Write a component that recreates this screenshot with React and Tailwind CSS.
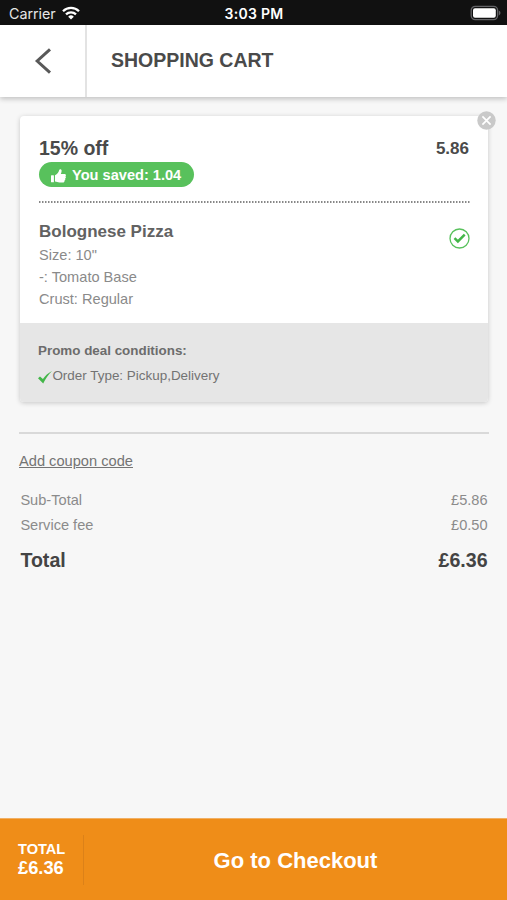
import React from "react";

const items = [
  { name: "Bolognese Pizza", options: ['Size: 10"', "-: Tomato Base", "Crust: Regular"] },
];

const fees = [
  { label: "Sub-Total", amount: "£5.86" },
  { label: "Service fee", amount: "£0.50" },
];

const StatusBar = () => (
  <div className="bg-[#111111] text-white h-[25px] shrink-0 grid grid-cols-3 items-center pl-[9px] pr-[6px] font-['Inter',sans-serif]">
    <div className="flex items-center gap-[6px] pt-[2px]">
      <span className="text-[14.3px] leading-5 tracking-[-0.03px] text-[#e6e6e6]">Carrier</span>
      <svg className="-mt-[2px]" width="18" height="14" viewBox="0 0 18 14" fill="none" stroke="#fff" strokeWidth="2.3">
        <path d="M1 5.2a11.4 11.4 0 0 1 16 0" />
        <path d="M4 8.3a7.2 7.2 0 0 1 10 0" />
        <path d="M9 13.6 6.2 10.7a4 4 0 0 1 5.6 0Z" fill="#fff" stroke="none" />
      </svg>
    </div>
    <span className="text-center text-[14px] leading-5 font-semibold tracking-[0.3px] pt-[2px] pr-[2px] whitespace-nowrap">
      3:03 PM
    </span>
    <svg className="justify-self-end" width="31" height="16" viewBox="0 0 31 16">
      <rect x="1.2" y="1.4" width="26.4" height="13.2" rx="4" fill="#111" stroke="#636366" strokeWidth="1.3" />
      <rect x="3" y="3.2" width="22.8" height="9.6" rx="2" fill="#fff" />
      <path d="M28.8 5.6c2.2.8 2.2 4 0 4.8Z" fill="#636366" />
    </svg>
  </div>
);

const Header = () => (
  <div className="bg-white h-[72px] shrink-0 flex items-center shadow-[0_2px_5px_rgba(0,0,0,0.22)]">
    <button className="w-[87px] h-full border-r-2 border-[#e3e3e3] flex items-center justify-center">
      <svg width="18" height="28" viewBox="0 0 18 28" fill="none" stroke="#595959" strokeWidth="3">
        <path d="M16 2.4 3.2 14 16 25.6" />
      </svg>
    </button>
    <h1 className="pl-6 pb-[2px] text-[19.5px] leading-6 font-bold text-[#4a4a4a]">SHOPPING CART</h1>
  </div>
);

const DealCard = () => (
  <div className="relative ml-5 mr-[19px] mt-[19px] bg-white rounded-[4px] shadow-[0_1px_5px_rgba(0,0,0,0.2)]">
    <button className="absolute -top-[5px] -right-[8px]">
      <svg width="19" height="19" viewBox="0 0 19 19">
        <circle cx="9.5" cy="9.5" r="9.2" fill="#c9c9c9" />
        <path d="M5.4 5.4l8.2 8.2M13.6 5.4l-8.2 8.2" stroke="#fff" strokeWidth="1.7" />
      </svg>
    </button>
    <div className="pl-[19px] pr-[18px] pt-[20px] h-[207px]">
      <div className="flex justify-between items-start font-bold text-[#4a4a4a]">
        <span className="text-[19.5px] leading-6">15% off</span>
        <span className="text-[17px] leading-6 pt-[1px] pr-[1px]">5.86</span>
      </div>
      <div className="mt-[2px] w-[155px] h-[25px] rounded-full bg-[#58c15c] text-white flex items-center pl-3 -translate-y-px">
        <svg className="mt-[3px]" width="15" height="14" viewBox="0 0 15 14" fill="#fff">
          <rect x="0" y="6.2" width="2.9" height="7" rx="0.5" />
          <path d="M4 6.3C6.4 5 7.8 3.2 8.2 1.1 8.4 0 10.4-.2 10.6 1.6c.1 1.1-.3 2.2-.8 3.4h3.6c1.7 0 2 1.6 1 2.3.8.7.6 1.9-.3 2.2.5.8.2 1.7-.6 2 .2 1.1-.4 1.9-1.6 1.9H8.5c-1.8 0-2.9-.8-4.5-1Z" />
        </svg>
        <span className="pl-[6px] text-[14.6px] leading-6 font-bold whitespace-nowrap">You saved: 1.04</span>
      </div>
      <svg className="mt-[13px] block w-full" height="2">
        <line x1="0" y1="1" x2="100%" y2="1" stroke="#606060" strokeWidth="1.5" strokeDasharray="1.5 1.5" />
      </svg>
      {items.map((item) => (
        <div key={item.name} className="flex justify-between items-start pt-[17px]">
          <div>
            <h2 className="text-[17px] leading-6 font-bold text-[#626262]">{item.name}</h2>
            <div className="text-[14.6px] leading-[22px] text-[#8a8a8a]">
              {item.options.map((option) => (
                <p key={option}>{option}</p>
              ))}
            </div>
          </div>
          <svg className="mt-[8px]" width="21" height="21" viewBox="0 0 21 21" fill="none">
            <circle cx="10.5" cy="10.5" r="9.5" stroke="#58c15c" strokeWidth="1.3" />
            <path d="M5.5 10.1l3.4 3.3 6.8-6.7" stroke="#43b649" strokeWidth="2.5" />
          </svg>
        </div>
      ))}
    </div>
    <div className="h-[79px] bg-[#e6e6e6] rounded-b-[4px] px-[18px] pt-[18px]">
      <p className="text-[13.4px] leading-5 font-bold text-[#6c6c6c]">Promo deal conditions:</p>
      <div className="mt-[5px] flex items-start">
        <svg className="mt-[4px] shrink-0" width="14" height="14" viewBox="0 0 14 14" fill="#43b649">
          <path d="M0 8.2 2 6.4 4.9 9.1C7.2 5.9 10 3 14 1 10.4 4.6 7.6 8.8 5.2 13.6Z" />
        </svg>
        <span className="pl-[0.4px] text-[13.45px] leading-5 text-[#737373]">Order Type: Pickup,Delivery</span>
      </div>
    </div>
  </div>
);

const Summary = () => (
  <div className="ml-[19px] mr-[18px] mt-[30px]">
    <div className="h-[2px] bg-[#d9d9d9]" />
    <a className="inline-block mt-[17px] text-[14.65px] leading-5 text-[#747474] underline">Add coupon code</a>
    <div className="px-[1.4px] pt-[15px] text-[14.6px] text-[#8b8b8b]">
      {fees.map((fee) => (
        <div key={fee.label} className="flex justify-between leading-[24.5px]">
          <span>{fee.label}</span>
          <span>{fee.amount}</span>
        </div>
      ))}
    </div>
    <div className="px-[1.4px] mt-[11px] flex justify-between text-[19.6px] leading-6 font-bold text-[#444]">
      <span>Total</span>
      <span>£6.36</span>
    </div>
  </div>
);

const CheckoutBar = () => (
  <div className="mt-auto h-[82px] shrink-0 bg-[#ef8d18] border-t border-[#f1b064] text-white font-bold flex items-center">
    <div className="w-[84px] h-[50px] pl-[18px] pb-[2px] border-r border-[#dc8118] flex flex-col justify-center">
      <span className="text-[14.6px] leading-[18px]">TOTAL</span>
      <span className="text-[18.3px] leading-[19px]">£6.36</span>
    </div>
    <button className="flex-1 h-full text-[22px] leading-7 pt-[3px]">Go to Checkout</button>
  </div>
);

const App = () => {
  return (
    <div className="h-screen bg-[#f7f7f7] flex flex-col overflow-hidden font-['Liberation_Sans',Arial,sans-serif]">
      <StatusBar />
      <Header />
      <DealCard />
      <Summary />
      <CheckoutBar />
    </div>
  );
};

export default App;
